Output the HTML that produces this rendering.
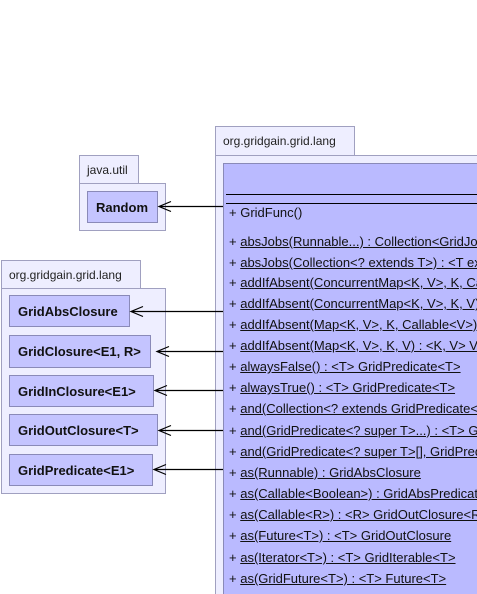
<!DOCTYPE html>
<html><head><style>
html,body{margin:0;width:477px;height:594px;overflow:hidden;}
body{background:#fff;position:relative;font-family:"Liberation Sans",sans-serif;}
.a{position:absolute;box-sizing:border-box;}
.pk{background:#eeeeff;border:1px solid #a0a0c0;}
.tab{background:#eeeeff;border:1px solid #a0a0c0;border-bottom:none;font-size:12px;color:#222;padding:7px 0 0 7px;white-space:nowrap;}
.cl{background:#c4c4ff;border:1px solid #8a8ab8;font-weight:bold;font-size:13px;color:#111;padding:8px 0 0 8px;white-space:nowrap;}
.ln{position:absolute;height:1px;background:#000;}
.m{position:absolute;left:229px;font-size:13px;white-space:nowrap;color:#111;}
.m u{text-decoration:underline;}
</style></head><body>
<div class="a tab" style="left:79px;top:155px;width:60px;height:29px">java.util</div>
<div class="a pk" style="left:79px;top:183px;width:87px;height:48px"></div>
<div class="a cl" style="left:87px;top:191px;width:71px;height:32px">Random</div>

<div class="a tab" style="left:1px;top:260px;width:140px;height:29px">org.gridgain.grid.lang</div>
<div class="a pk" style="left:1px;top:288px;width:165px;height:206px"></div>
<div class="a cl" style="left:9px;top:295px;width:121px;height:32px">GridAbsClosure</div>
<div class="a cl" style="left:9px;top:335px;width:142px;height:33px">GridClosure&lt;E1, R&gt;</div>
<div class="a cl" style="left:9px;top:375px;width:145px;height:32px">GridInClosure&lt;E1&gt;</div>
<div class="a cl" style="left:9px;top:414px;width:149px;height:32px">GridOutClosure&lt;T&gt;</div>
<div class="a cl" style="left:9px;top:454px;width:144px;height:32px">GridPredicate&lt;E1&gt;</div>

<div class="a tab" style="left:215px;top:126px;width:140px;height:30px">org.gridgain.grid.lang</div>
<div class="a pk" style="left:215px;top:155px;width:270px;height:450px"></div>
<div class="a" style="left:223px;top:163px;width:260px;height:440px;background:#babaff;border:1px solid #8a8ab8"></div>
<div class="ln" style="left:226px;top:194px;width:260px"></div>
<div class="ln" style="left:226px;top:203px;width:260px"></div>
<div class="m" style="top:205px">+ GridFunc()</div>
<div class="m" style="top:234px">+ <u>absJobs(Runnable...) : Collection&lt;GridJob&gt;</u></div>
<div class="m" style="top:255px">+ <u>absJobs(Collection&lt;? extends T&gt;) : &lt;T extends</u></div>
<div class="m" style="top:275px">+ <u>addIfAbsent(ConcurrentMap&lt;K, V&gt;, K, Callable</u></div>
<div class="m" style="top:296px">+ <u>addIfAbsent(ConcurrentMap&lt;K, V&gt;, K, V)</u></div>
<div class="m" style="top:317px">+ <u>addIfAbsent(Map&lt;K, V&gt;, K, Callable&lt;V&gt;)</u></div>
<div class="m" style="top:338px">+ <u>addIfAbsent(Map&lt;K, V&gt;, K, V) : &lt;K, V&gt; V</u></div>
<div class="m" style="top:359px">+ <u>alwaysFalse() : &lt;T&gt; GridPredicate&lt;T&gt; </u></div>
<div class="m" style="top:380px">+ <u>alwaysTrue() : &lt;T&gt; GridPredicate&lt;T&gt; </u></div>
<div class="m" style="top:401px">+ <u>and(Collection&lt;? extends GridPredicate&lt;T&gt;</u></div>
<div class="m" style="top:423px">+ <u>and(GridPredicate&lt;? super T&gt;...) : &lt;T&gt; Grid</u></div>
<div class="m" style="top:444px">+ <u>and(GridPredicate&lt;? super T&gt;[], GridPredicate</u></div>
<div class="m" style="top:465px">+ <u>as(Runnable) : GridAbsClosure </u></div>
<div class="m" style="top:486px">+ <u>as(Callable&lt;Boolean&gt;) : GridAbsPredicate</u></div>
<div class="m" style="top:507px">+ <u>as(Callable&lt;R&gt;) : &lt;R&gt; GridOutClosure&lt;R&gt;</u></div>
<div class="m" style="top:528px">+ <u>as(Future&lt;T&gt;) : &lt;T&gt; GridOutClosure </u></div>
<div class="m" style="top:550px">+ <u>as(Iterator&lt;T&gt;) : &lt;T&gt; GridIterable&lt;T&gt; </u></div>
<div class="m" style="top:571px">+ <u>as(GridFuture&lt;T&gt;) : &lt;T&gt; Future&lt;T&gt; </u></div>

<svg class="a" style="left:0;top:0" width="477" height="594" fill="none" stroke="#000" stroke-width="1.2">
<path d="M223 206.5H159M171 201.5L159 206.5L171 211.5"/>
<path d="M223 311.5H131M143 306.5L131 311.5L143 316.5"/>
<path d="M223 351.5H157M169 346.5L157 351.5L169 356.5"/>
<path d="M223 390.5H155M167 385.5L155 390.5L167 395.5"/>
<path d="M223 430.5H159M171 425.5L159 430.5L171 435.5"/>
<path d="M223 469.5H154M166 464.5L154 469.5L166 474.5"/>
</svg>
</body></html>
